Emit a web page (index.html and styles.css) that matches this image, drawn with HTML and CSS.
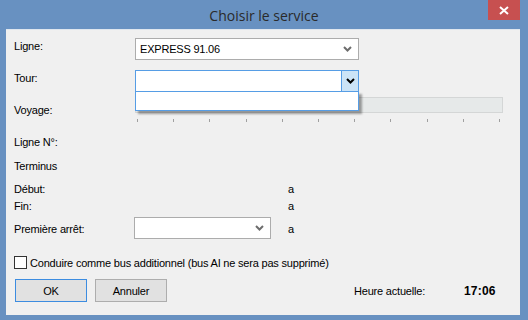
FILE: index.html
```html
<!DOCTYPE html>
<html lang="fr">
<head>
  <meta charset="UTF-8" />
  <title>Choisir le service</title>
  <link rel="stylesheet" href="styles.css">
</head>
<body>
  <div class="window">
    <div class="titlebar">
      <span class="title">Choisir le service</span>
      <div class="close-btn">
        <svg width="10" height="9" viewBox="0 0 10 9"><path d="M1 1 L9 8 M9 1 L1 8" stroke="#fff" stroke-width="2"/></svg>
      </div>
    </div>

    <div class="client">
      <div class="row row-ligne">
        <label class="label">Ligne:</label>
        <div class="combo combo-wide">
          <span class="combo-text">EXPRESS 91.06</span>
          <svg class="chevron" width="9" height="6" viewBox="0 0 9 6"><path d="M1 1 L4.5 4.5 L8 1" stroke="#6d6d6d" stroke-width="2" fill="none"/></svg>
        </div>
      </div>

      <div class="row row-tour">
        <label class="label">Tour:</label>
        <div class="combo-holder">
          <div class="combo combo-wide combo-active">
            <span class="combo-text"></span>
            <div class="drop-btn">
              <svg width="9" height="6" viewBox="0 0 9 6"><path d="M1 1 L4.5 4.5 L8 1" stroke="#000" stroke-width="2" fill="none"/></svg>
            </div>
          </div>
          <div class="drop-list"></div>
        </div>
      </div>

      <div class="row row-voyage">
        <label class="label">Voyage:</label>
        <div class="track-wrap">
          <div class="track"></div>
          <div class="ticks">
            <span></span><span></span><span></span><span></span><span></span><span></span>
            <span></span><span></span><span></span><span></span><span></span>
          </div>
        </div>
      </div>

      <div class="row row-num"><span class="label">Ligne N°:</span></div>
      <div class="row row-term"><span class="label">Terminus</span></div>

      <div class="row row-debut">
        <span class="label label-long">Début:</span>
        <span class="value">a</span>
      </div>
      <div class="row row-fin">
        <span class="label label-long">Fin:</span>
        <span class="value">a</span>
      </div>

      <div class="row row-arret">
        <span class="label label-arret">Première arrêt:</span>
        <div class="combo combo-small">
          <span class="combo-text"></span>
          <svg class="chevron" width="9" height="6" viewBox="0 0 9 6"><path d="M1 1 L4.5 4.5 L8 1" stroke="#6d6d6d" stroke-width="2" fill="none"/></svg>
        </div>
        <span class="value value-arret">a</span>
      </div>

      <div class="row row-check">
        <span class="checkbox"></span>
        <span class="check-text">Conduire comme bus additionnel (bus AI ne sera pas supprimé)</span>
      </div>

      <div class="row row-buttons">
        <button class="btn btn-default">OK</button>
        <button class="btn">Annuler</button>
        <span class="time-label">Heure actuelle:</span>
        <span class="time">17:06</span>
      </div>
    </div>
  </div>
</body>
</html>
```

FILE: styles.css
```css
* {
  margin: 0;
  padding: 0;
  box-sizing: border-box;
}

body {
  margin: 0;
  font-family: "Liberation Sans", Arial, sans-serif;
  font-size: 11px;
  letter-spacing: -0.2px;
  color: #000;
}

.window {
  width: 528px;
  height: 320px;
  background-color: #6891c1;
  display: flex;
  flex-direction: column;
  position: relative;
}

.titlebar {
  height: 29px;
  display: flex;
  justify-content: center;
  align-items: center;
}

.title {
  font-family: "Open Sans", "Liberation Sans", sans-serif;
  font-size: 14px;
  letter-spacing: 0;
  color: #2a2a2a;
  margin-top: 1px;
}

.close-btn {
  position: absolute;
  top: 0;
  right: 8px;
  width: 32px;
  height: 20px;
  background-color: #c75050;
  display: flex;
  justify-content: center;
  align-items: center;
}

.client {
  margin: 0 8px 5px 6px;
  flex: 1;
  background-color: #f0f0f0;
  border-top: 1px solid #dfe6ee;
  padding: 0 0 0 8px;
}

.row {
  display: flex;
  align-items: flex-start;
}

.label {
  width: 121px;
  line-height: 14px;
}

.combo {
  height: 22px;
  border: 1px solid #acacac;
  background-color: #fff;
  display: flex;
  align-items: center;
  position: relative;
}

.combo-text {
  flex: 1;
  padding-left: 4px;
  line-height: 14px;
}

.chevron {
  margin-right: 6px;
}

.combo-wide {
  width: 224px;
}

.combo-small {
  width: 137px;
  margin-left: -1px;
}

.combo-active {
  border-color: #569de5;
}

.drop-btn {
  width: 17px;
  height: 20px;
  border-left: 1px solid #569de5;
  background-color: #cce4f7;
  display: flex;
  justify-content: center;
  align-items: center;
}

.row-ligne {
  margin-top: 8px;
}

.row-ligne .label,
.row-tour .label {
  padding-top: 1px;
}

.row-tour {
  margin-top: 10px;
}

.combo-holder {
  position: relative;
  z-index: 2;
}

.drop-list {
  position: absolute;
  top: 21px;
  left: 0;
  width: 224px;
  height: 20px;
  background-color: #fff;
  border: 1px solid #569de5;
  box-shadow: 3px 3px 2px rgba(0, 0, 0, 0.35);
}

.row-voyage {
  margin-top: 5px;
}

.row-voyage .label {
  padding-top: 6px;
}

.track-wrap {
  width: 368px;
}

.track {
  height: 16px;
  background-color: #e6e9e9;
  border: 1px solid #d4d6d6;
}

.ticks {
  display: flex;
  justify-content: space-between;
  padding: 0 3px 0 2px;
  margin-top: 6px;
}

.ticks span {
  width: 1px;
  height: 3px;
  background-color: #a0a0a0;
}

.row-num {
  margin-top: 13px;
}

.row-term {
  margin-top: 10px;
}

.row-debut {
  margin-top: 9px;
}

.row-fin {
  margin-top: 3px;
}

.label-long {
  width: 274px;
}

.value {
  line-height: 14px;
}

.row-arret {
  margin-top: 4px;
  align-items: center;
}

.label-arret {
  width: 121px;
  padding-top: 2px;
}

.value-arret {
  margin-left: 17px;
  padding-top: 2px;
}

.row-check {
  margin-top: 17px;
  align-items: center;
}

.checkbox {
  width: 13px;
  height: 13px;
  border: 1px solid #333;
  background-color: #fff;
}

.check-text {
  margin-left: 3px;
}

.row-buttons {
  margin-top: 10px;
  align-items: center;
  padding-left: 1px;
}

.btn {
  width: 72px;
  height: 23px;
  font-family: "Liberation Sans", Arial, sans-serif;
  font-size: 11px;
  letter-spacing: -0.2px;
  color: #000;
  background-color: #e1e1e1;
  border: 1px solid #adadad;
  margin-right: 8px;
}

.btn-default {
  border-color: #3c8ce0;
}

.time-label {
  margin-left: 179px;
}

.time {
  margin-left: 39px;
  font-weight: bold;
  font-size: 12px;
  letter-spacing: 0.2px;
}
```
